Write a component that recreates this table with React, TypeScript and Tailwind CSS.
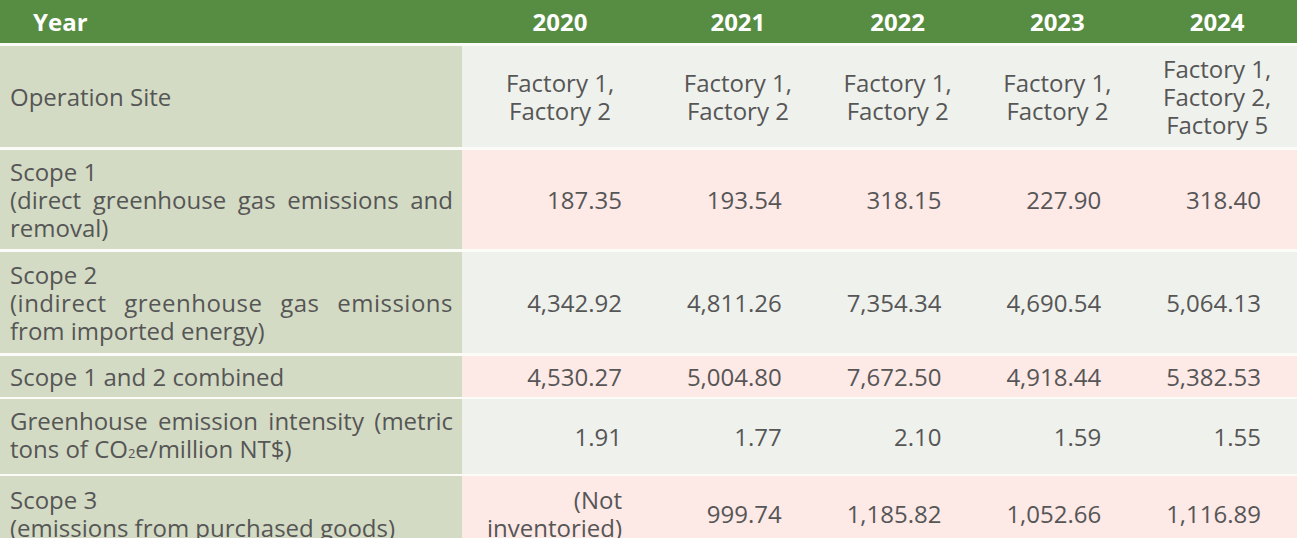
import React from "react";

const GRID = "grid grid-cols-[462px_196px_1fr_1fr_1fr_1fr]";

type Row = {
  label: React.ReactNode;
  values: React.ReactNode[];
  h: string;
  mt: string;
  pink: boolean;
  center?: boolean;
};

const rows: Row[] = [
  {
    label: <div>Operation Site</div>,
    values: [
      <>Factory 1,<br />Factory 2</>,
      <>Factory 1,<br />Factory 2</>,
      <>Factory 1,<br />Factory 2</>,
      <>Factory 1,<br />Factory 2</>,
      <>Factory 1,<br />Factory 2,<br />Factory 5</>,
    ],
    h: "h-[101px]",
    mt: "mt-[3px]",
    pink: false,
    center: true,
  },
  {
    label: (
      <>
        <div>Scope 1</div>
        <div className="[text-align-last:justify]">(direct greenhouse gas emissions and</div>
        <div>removal)</div>
      </>
    ),
    values: ["187.35", "193.54", "318.15", "227.90", "318.40"],
    h: "h-[99px]",
    mt: "mt-[3px]",
    pink: true,
  },
  {
    label: (
      <>
        <div>Scope 2</div>
        <div className="[text-align-last:justify] tracking-[0.5px]">(indirect greenhouse gas emissions</div>
        <div>from imported energy)</div>
      </>
    ),
    values: ["4,342.92", "4,811.26", "7,354.34", "4,690.54", "5,064.13"],
    h: "h-[101px]",
    mt: "mt-[3px]",
    pink: false,
  },
  {
    label: <div>Scope 1 and 2 combined</div>,
    values: ["4,530.27", "5,004.80", "7,672.50", "4,918.44", "5,382.53"],
    h: "h-[41px]",
    mt: "mt-[3px]",
    pink: true,
  },
  {
    label: (
      <>
        <div className="[text-align-last:justify]">Greenhouse emission intensity (metric</div>
        <div>
          tons of CO<span className="text-[13px]">2</span>e/million NT$)
        </div>
      </>
    ),
    values: ["1.91", "1.77", "2.10", "1.59", "1.55"],
    h: "h-[75px]",
    mt: "mt-[2px]",
    pink: false,
  },
  {
    label: (
      <>
        <div>Scope 3</div>
        <div>(emissions from purchased goods)</div>
      </>
    ),
    values: [<>(Not<br />inventoried)</>, "999.74", "1,185.82", "1,052.66", "1,116.89"],
    h: "h-[76px]",
    mt: "mt-[2px]",
    pink: true,
  },
];

export default function App() {
  return (
    <div
      className="w-[1297px] h-[538px] overflow-hidden bg-[#fbfcf8] text-[24px] leading-[28px] text-[#565656]"
      style={{ fontFamily: '"Open Sans", "Noto Sans", sans-serif' }}
    >
      <div className={`${GRID} h-[43px] bg-[#578d42] text-white font-bold items-center`}>
        <div className="pl-[33px]">Year</div>
        {["2020", "2021", "2022", "2023", "2024"].map((y) => (
          <div key={y} className="text-center">
            {y}
          </div>
        ))}
      </div>
      {rows.map((r, i) => (
        <div key={i} className={`${GRID} ${r.h} ${r.mt}`}>
          <div className="bg-[#d4dbc4] pl-[10px] pr-[9px] flex flex-col justify-center">{r.label}</div>
          {r.values.map((v, j) => (
            <div
              key={j}
              className={`${r.pink ? "bg-[#fde9e6]" : "bg-[#eff1ec]"} flex flex-col justify-center ${
                r.center ? "items-center text-center" : "items-end text-right pr-[36px]"
              }`}
            >
              <div>{v}</div>
            </div>
          ))}
        </div>
      ))}
    </div>
  );
}
